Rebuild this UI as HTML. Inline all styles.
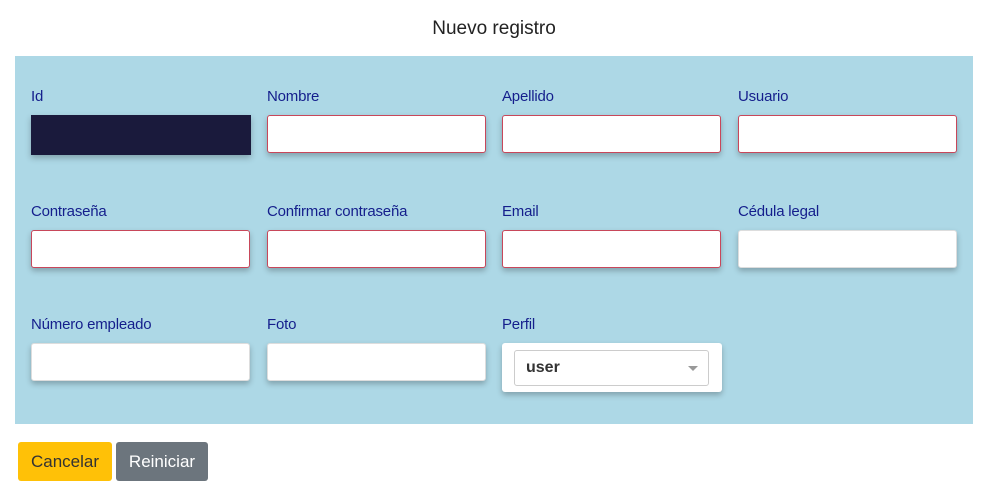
<!DOCTYPE html>
<html><head><style>
body{margin:0;width:984px;height:493px;background:#fff;font-family:"Liberation Sans",sans-serif;position:relative;overflow:hidden}
.t{position:absolute;top:18px;left:0;width:988px;text-align:center;font-size:19px;color:#222}
.p{position:absolute;left:15px;top:56px;width:958px;height:368px;background:#add8e6}
.l{position:absolute;font-size:15px;color:#141e8c;margin-top:2px;letter-spacing:-0.2px}
.i{position:absolute;width:217px;height:36px;background:#fff;border:1px solid #c8475a;border-radius:3px;box-shadow:0 3px 6px rgba(0,0,0,.25)}
.n{border-color:#ddd}
.b{position:absolute;top:442px;height:39px;border-radius:3px;font-size:17px;line-height:39px;text-align:center}
</style></head><body>
<div class="t">Nuevo registro</div>
<div class="p"></div>
<div class="l" style="left:31px;top:86px">Id</div>
<div class="l" style="left:267px;top:86px">Nombre</div>
<div class="l" style="left:502px;top:86px">Apellido</div>
<div class="l" style="left:738px;top:86px">Usuario</div>
<div style="position:absolute;left:31px;top:115px;width:220px;height:40px;background:#1a1a3c;box-shadow:0 3px 6px rgba(0,0,0,.25)"></div>
<div class="i" style="left:267px;top:115px"></div>
<div class="i" style="left:502px;top:115px"></div>
<div class="i" style="left:738px;top:115px"></div>
<div class="l" style="left:31px;top:201px">Contraseña</div>
<div class="l" style="left:267px;top:201px">Confirmar contraseña</div>
<div class="l" style="left:502px;top:201px">Email</div>
<div class="l" style="left:738px;top:201px">Cédula legal</div>
<div class="i" style="left:31px;top:230px"></div>
<div class="i" style="left:267px;top:230px"></div>
<div class="i" style="left:502px;top:230px"></div>
<div class="i n" style="left:738px;top:230px"></div>
<div class="l" style="left:31px;top:314px">Número empleado</div>
<div class="l" style="left:267px;top:314px">Foto</div>
<div class="l" style="left:502px;top:314px">Perfil</div>
<div class="i n" style="left:31px;top:343px"></div>
<div class="i n" style="left:267px;top:343px"></div>
<div class="i n" style="left:502px;top:343px;height:49px;border:none;width:220px"></div>
<div style="position:absolute;left:514px;top:350px;width:193px;height:34px;border:1px solid #ccc;border-radius:3px;background:#fff"><span style="position:absolute;left:11px;top:8px;font-weight:bold;font-size:16px;color:#333">user</span><span style="position:absolute;right:10px;top:15px;border:5px solid transparent;border-top-color:#999;border-bottom:0"></span></div>
<div class="b" style="left:18px;width:94px;background:#ffc107;color:#333">Cancelar</div>
<div class="b" style="left:116px;width:92px;background:#6c757d;color:#fff">Reiniciar</div>
</body></html>
